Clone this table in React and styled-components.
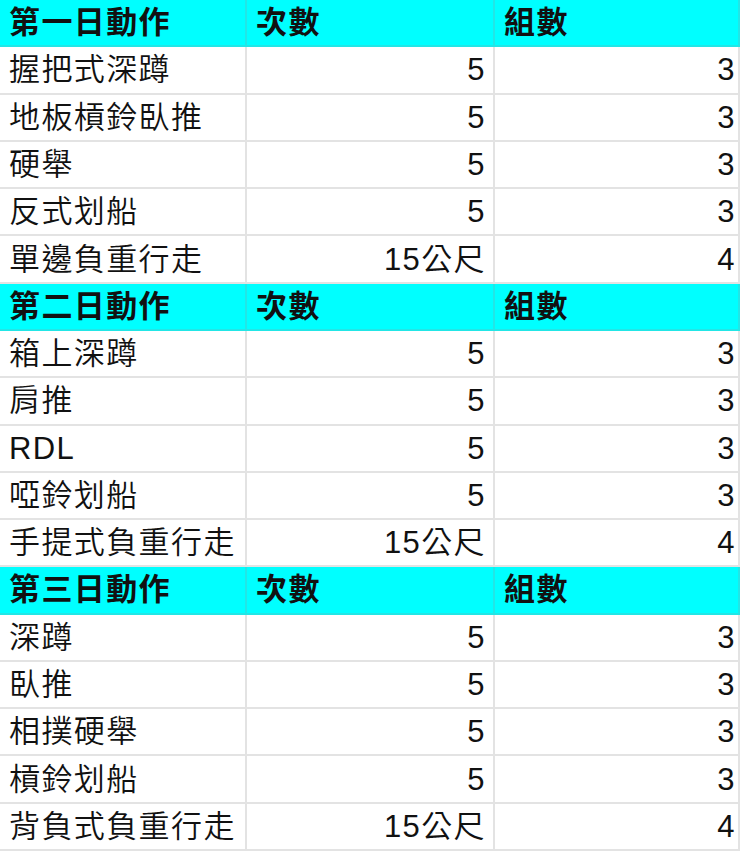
import React from 'react';
import styled, { createGlobalStyle } from 'styled-components';

const GlobalStyle = createGlobalStyle`
  html, body {
    margin: 0;
    padding: 0;
    background: #ffffff;
  }
`;

const Sheet = styled.div`
  display: grid;
  grid-template-columns: 247px 248px 245px;
  grid-template-rows: repeat(18, 1fr);
  width: 740px;
  height: 851px;
  overflow: hidden;
  font-family: "Liberation Sans", "Noto Sans CJK TC", sans-serif;
  color: #111111;
`;

const Cell = styled.div`
  display: flex;
  align-items: center;
  justify-content: ${props => (props.align === 'right' ? 'flex-end' : 'flex-start')};
  box-sizing: border-box;
  padding: 0 ${props => props.padRight || 8}px 0 9px;
  font-size: 31px;
  letter-spacing: 1.4px;
  line-height: 1;
  white-space: nowrap;
  background: ${props => (props.head ? '#00ffff' : '#ffffff')};
  font-weight: ${props => (props.head ? 600 : 350)};
  border-right: 2px solid ${props => (props.head ? '#22e6e6' : '#e3e3e3')};
  border-bottom: 2px solid ${props => (props.head ? '#22e6e6' : '#e3e3e3')};
`;

const days = [
  {
    title: '第一日動作',
    rows: [
      ['握把式深蹲', '5', '3'],
      ['地板槓鈴臥推', '5', '3'],
      ['硬舉', '5', '3'],
      ['反式划船', '5', '3'],
      ['單邊負重行走', '15公尺', '4'],
    ],
  },
  {
    title: '第二日動作',
    rows: [
      ['箱上深蹲', '5', '3'],
      ['肩推', '5', '3'],
      ['RDL', '5', '3'],
      ['啞鈴划船', '5', '3'],
      ['手提式負重行走', '15公尺', '4'],
    ],
  },
  {
    title: '第三日動作',
    rows: [
      ['深蹲', '5', '3'],
      ['臥推', '5', '3'],
      ['相撲硬舉', '5', '3'],
      ['槓鈴划船', '5', '3'],
      ['背負式負重行走', '15公尺', '4'],
    ],
  },
];

export default function App() {
  return (
    <>
      <GlobalStyle />
      <Sheet>
        {days.map(day => (
          <React.Fragment key={day.title}>
            <Cell head>{day.title}</Cell>
            <Cell head>次數</Cell>
            <Cell head>組數</Cell>
            {day.rows.map(([name, reps, sets]) => (
              <React.Fragment key={name}>
                <Cell>{name}</Cell>
                <Cell align="right" padRight={7}>{reps}</Cell>
                <Cell align="right" padRight={2}>{sets}</Cell>
              </React.Fragment>
            ))}
          </React.Fragment>
        ))}
      </Sheet>
    </>
  );
}
